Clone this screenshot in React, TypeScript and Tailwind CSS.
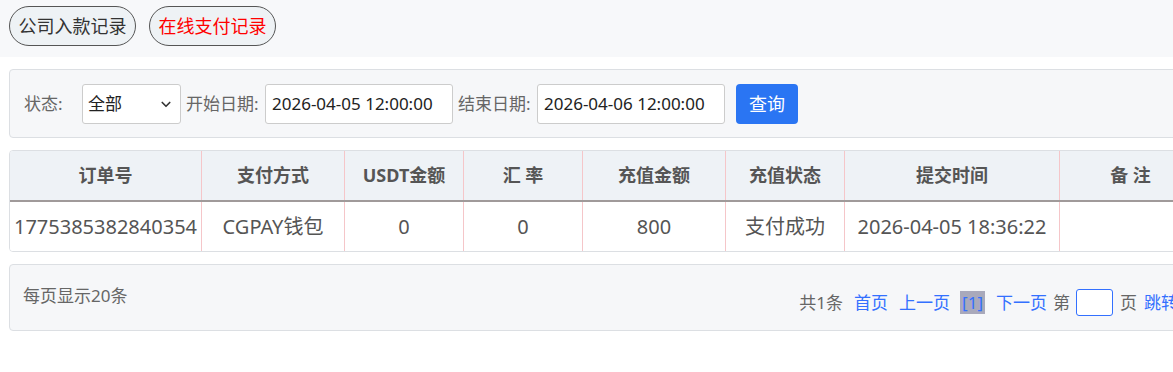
import React from 'react';

const font = "font-['Noto_Sans','Noto_Sans_CJK_SC',sans-serif]";

const columns = [
  { title: '订单号', width: 'w-[191px]' },
  { title: '支付方式', width: 'w-[143px]' },
  { title: 'USDT金额', width: 'w-[119px]' },
  { title: '汇 率', width: 'w-[119px]' },
  { title: '充值金额', width: 'w-[143px]' },
  { title: '充值状态', width: 'w-[119px]' },
  { title: '提交时间', width: 'w-[215px]' },
  { title: '备 注', width: 'w-[142px]' },
];

const row = ['1775385382840354', 'CGPAY钱包', '0', '0', '800', '支付成功', '2026-04-05 18:36:22', ''];

const Chevron = () => (
  <svg className="w-[12px] h-[12px] text-[#333]" viewBox="0 0 16 16" fill="none" stroke="currentColor">
    <path d="M3 6l5 5 5-5" strokeWidth="2.2" strokeLinecap="round" strokeLinejoin="round" />
  </svg>
);

const App: React.FC = () => {
  return (
    <div className={`w-full overflow-hidden bg-white ${font}`}>
      {/* tabs */}
      <div className="h-[57px] bg-[#f7f8fa] flex items-start gap-[13px] pl-[9px] pt-[6px]">
        <button className="w-[127px] h-[40px] rounded-full border border-[#555] bg-[#eef2f5] text-[18px] text-[#333]">
          公司入款记录
        </button>
        <button className="w-[127px] h-[40px] rounded-full border border-[#555] bg-[#eef2f5] text-[18px] text-[#f00]">
          在线支付记录
        </button>
      </div>

      <div className="w-[1200px] ml-[9px] pt-[12px] flex flex-col">
        {/* filters */}
        <div className="h-[69px] border border-[#dcdfe3] rounded-[4px] bg-[#f6f7f9] flex items-center pl-[14px] text-[17px] text-[#666]">
          <span className="w-[58px]">状态:</span>
          <div className="w-[99px] h-[40px] bg-white border border-[#ccc] rounded-[3px] flex items-center justify-between pl-[5px] pr-[8px] text-[#222]">
            <span>全部</span>
            <Chevron />
          </div>
          <span className="w-[84px] pl-[5px]">开始日期:</span>
          <div className="w-[188px] h-[40px] bg-white border border-[#ccc] rounded-[3px] flex items-center pl-[6px] text-[#222]">
            2026-04-05 12:00:00
          </div>
          <span className="w-[84px] pl-[5px]">结束日期:</span>
          <div className="w-[188px] h-[40px] bg-white border border-[#ccc] rounded-[3px] flex items-center pl-[6px] text-[#222]">
            2026-04-06 12:00:00
          </div>
          <button className="ml-[11px] mt-[1px] w-[62px] h-[40px] rounded-[4px] bg-[#2a75f3] text-white text-[18px]">查询</button>
        </div>

        {/* table */}
        <div className="mt-[12px] border border-[#dcdfe3] rounded-[4px] overflow-hidden">
          <div className="flex h-[51px] bg-[#eef2f6] border-b-2 border-[#a09a9a]">
            {columns.map((c, i) => (
              <div
                key={c.title}
                className={`${c.width} shrink-0 flex items-center justify-center text-[18px] font-bold text-[#555] ${i > 0 ? 'border-l border-[#f5c6c9]' : ''}`}
              >
                {c.title}
              </div>
            ))}
          </div>
          <div className="flex h-[49px] bg-white">
            {row.map((v, i) => (
              <div
                key={i}
                className={`${columns[i].width} shrink-0 flex items-center justify-center text-[20px] text-[#555] whitespace-nowrap ${i > 0 ? 'border-l border-[#f5c6c9]' : ''}`}
              >
                {v}
              </div>
            ))}
          </div>
        </div>

        {/* pager */}
        <div className="mt-[12px] h-[67px] border border-[#dcdfe3] rounded-[4px] bg-[#f6f7f9] flex items-start justify-between pl-[13px] pr-[30px] text-[17px]">
          <span className="mt-[18px] text-[#666]">每页显示20条</span>
          <div className="mt-[24px] flex items-center text-[#666]">
            <span>共1条</span>
            <span className="ml-[11px] text-[#3370ff]">首页</span>
            <span className="ml-[11px] text-[#3370ff]">上一页</span>
            <span className="ml-[10px] text-[#3370ff] bg-[#a9a9bb] px-[2px] leading-[23px]">[1]</span>
            <span className="ml-[11px] text-[#3370ff]">下一页</span>
            <span className="ml-[6px]">第</span>
            <span className="ml-[6px] w-[37px] h-[27px] bg-white border border-[#3370ff] rounded-[3px]" />
            <span className="ml-[7px]">页</span>
            <span className="ml-[7px] text-[#3370ff]">跳转</span>
          </div>
        </div>
      </div>
      <div className="h-[40px]" />
    </div>
  );
};

export default App;
